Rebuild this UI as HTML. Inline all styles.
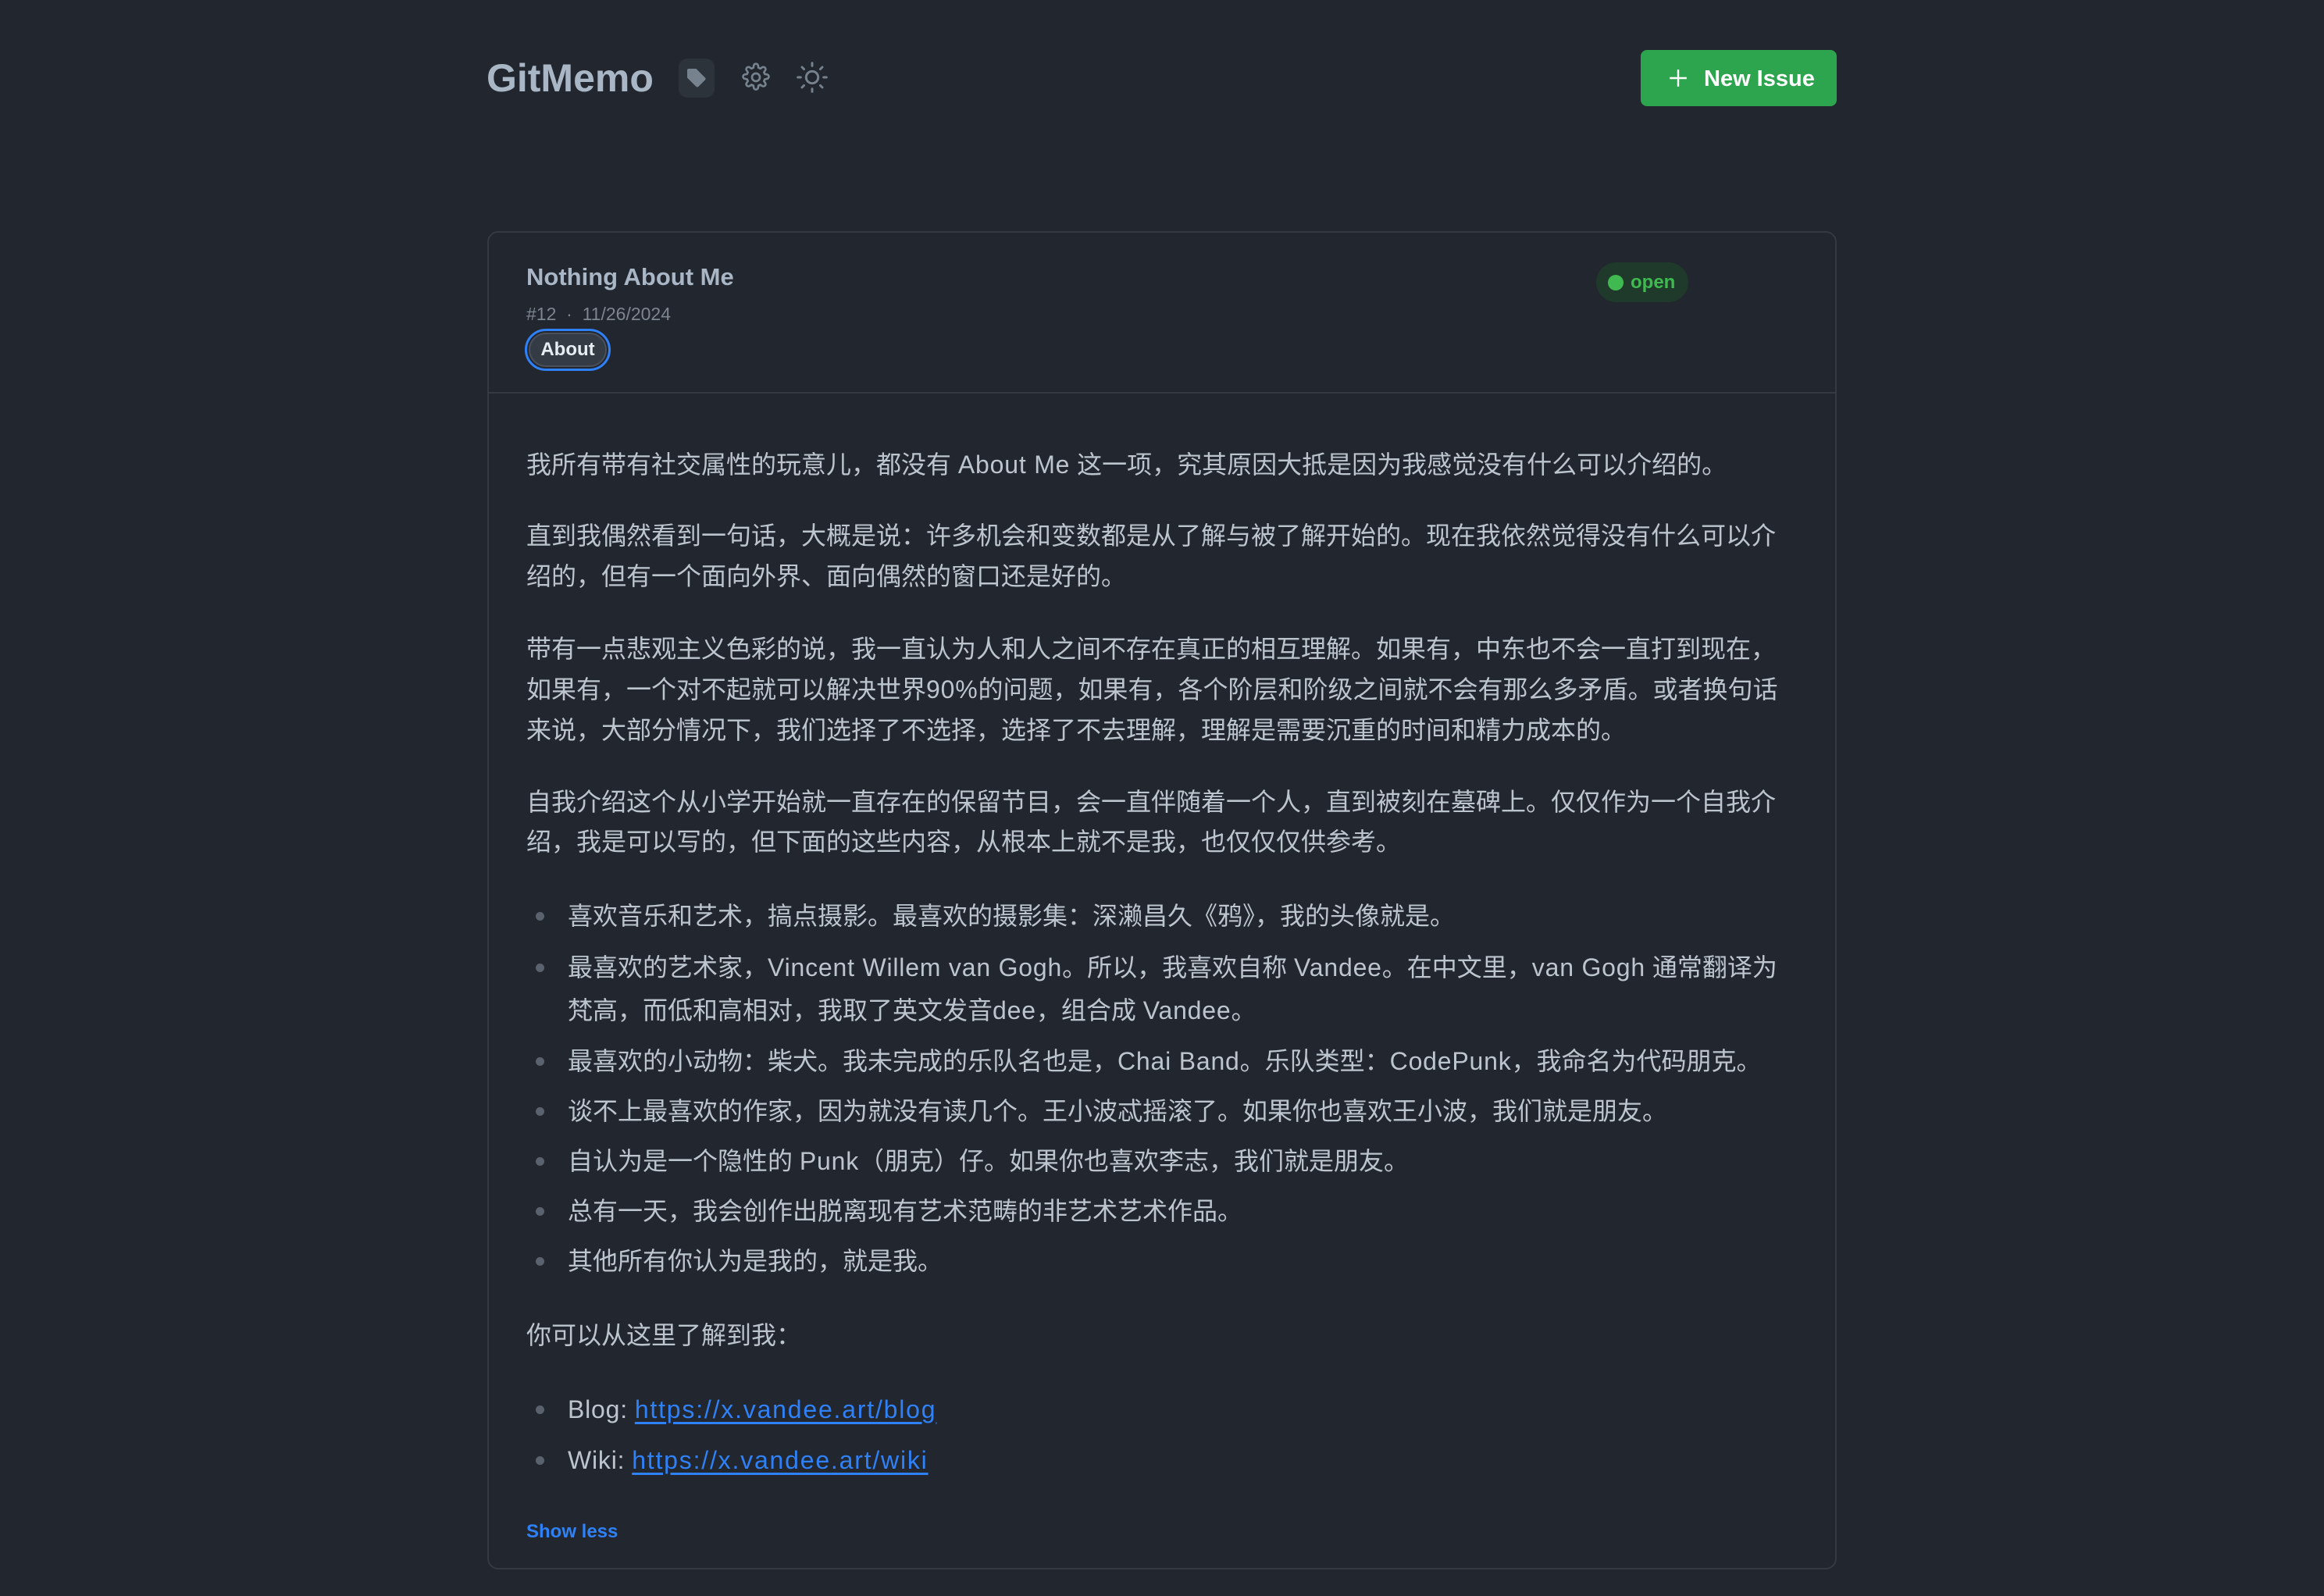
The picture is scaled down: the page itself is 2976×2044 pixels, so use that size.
<!DOCTYPE html>
<html><head><meta charset="utf-8"><style>
*{margin:0;padding:0;box-sizing:border-box}
body{width:2976px;height:2044px;background:#22262e;font-family:"Liberation Sans","Noto Sans CJK SC",sans-serif;position:relative;overflow:hidden}
.a{position:absolute;white-space:nowrap}
.logo{left:623px;top:68px;font-size:50px;font-weight:bold;color:#a9b6c5;line-height:64px}
.card{left:624px;top:296px;width:1728px;height:1714px;border:2px solid #353a42;border-radius:14px}
.sep{left:626px;top:502px;width:1724px;height:2px;background:#353a42}
.t{left:674px;font-size:32px;color:#bcc5ce;line-height:50px}
.li{left:727px;font-size:32px;color:#bcc5ce;line-height:50px}
.dot{position:absolute;width:11px;height:11px;border-radius:50%;background:#5a626d}
a{color:#2f81f7;text-decoration:underline;text-underline-offset:5px;letter-spacing:1.8px}
.w{letter-spacing:0.8px}
</style></head><body>
<div class="a logo">GitMemo</div>
<div class="a" style="left:869px;top:75px;width:46px;height:50px;background:#2d333b;border-radius:11px"></div>
<svg class="a" style="left:876px;top:84px" width="32" height="32" viewBox="0 0 24 24"><path d="M3 4.5A1.5 1.5 0 0 1 4.5 3h7.1l8.6 8.6a1.6 1.6 0 0 1 0 2.2l-6.4 6.4a1.6 1.6 0 0 1-2.2 0L3 11.6z" fill="#76838f"/></svg>
<svg class="a" style="left:948px;top:79px" width="40" height="40" viewBox="0 0 24 24" fill="none" stroke="#76838f" stroke-width="1.6" stroke-linejoin="round"><path d="M10.3 3.3a1.7 1.7 0 0 1 3.4 0l.3 1.4 1.4.6 1.2-.8a1.7 1.7 0 0 1 2.4 2.4l-.8 1.2.6 1.4 1.4.3a1.7 1.7 0 0 1 0 3.4l-1.4.3-.6 1.4.8 1.2a1.7 1.7 0 0 1-2.4 2.4l-1.2-.8-1.4.6-.3 1.4a1.7 1.7 0 0 1-3.4 0l-.3-1.4-1.4-.6-1.2.8a1.7 1.7 0 0 1-2.4-2.4l.8-1.2-.6-1.4-1.4-.3a1.7 1.7 0 0 1 0-3.4l1.4-.3.6-1.4-.8-1.2a1.7 1.7 0 0 1 2.4-2.4l1.2.8 1.4-.6z"/><circle cx="12" cy="12" r="3"/></svg>
<svg class="a" style="left:1018px;top:77px" width="44" height="44" viewBox="0 0 24 24" fill="none" stroke="#76838f" stroke-width="1.6" stroke-linecap="round"><circle cx="12" cy="12" r="4.2"/><path d="M12 2v2M12 20v2M2 12h2M20 12h2M4.9 4.9l1.4 1.4M17.7 17.7l1.4 1.4M4.9 19.1l1.4-1.4M17.7 6.3l1.4-1.4"/></svg>
<div class="a" style="left:2101px;top:64px;width:251px;height:72px;background:#2da44e;border-radius:8px"></div>
<svg class="a" style="left:2136px;top:87px" width="26" height="26" viewBox="0 0 24 24" stroke="#fff" stroke-width="2.2"><path d="M12 2v20M2 12h20"/></svg>
<div class="a" style="left:2182px;top:81px;font-size:29px;font-weight:bold;color:#fff;line-height:40px">New Issue</div>

<div class="a card"></div>
<div class="a sep"></div>
<div class="a" style="left:674px;top:335px;font-size:31px;font-weight:bold;color:#a9b6c5;line-height:40px">Nothing About Me</div>
<div class="a" style="left:674px;top:387px;font-size:23px;color:#7d8590;line-height:30px">#12 &nbsp;·&nbsp; 11/26/2024</div>
<div class="a" style="left:672px;top:421px;width:110px;height:54px;border:3px solid #2f81f7;border-radius:27px"></div>
<div class="a" style="left:677px;top:426px;width:100px;height:44px;border:2px solid #4a515b;background:#353b45;border-radius:22px;color:#e6edf3;font-size:24px;font-weight:bold;text-align:center;line-height:40px">About</div>
<div class="a" style="left:2044px;top:336px;width:118px;height:51px;background:#1f3a2a;border-radius:26px"></div>
<div class="a" style="left:2059px;top:352px;width:20px;height:20px;border-radius:50%;background:#3fb950"></div>
<div class="a" style="left:2088px;top:345px;font-size:24px;font-weight:bold;color:#3fb950;line-height:34px">open</div>

<div class="a t" style="top:570px">我所有带有社交属性的玩意儿，都没有 <span class="w">About Me</span> 这一项，究其原因大抵是因为我感觉没有什么可以介绍的。</div>
<div class="a t" style="top:661px">直到我偶然看到一句话，大概是说：许多机会和变数都是从了解与被了解开始的。现在我依然觉得没有什么可以介</div>
<div class="a t" style="top:713px">绍的，但有一个面向外界、面向偶然的窗口还是好的。</div>
<div class="a t" style="top:806px">带有一点悲观主义色彩的说，我一直认为人和人之间不存在真正的相互理解。如果有，中东也不会一直打到现在，</div>
<div class="a t" style="top:858px">如果有，一个对不起就可以解决世界<span class="w">90%</span>的问题，如果有，各个阶层和阶级之间就不会有那么多矛盾。或者换句话</div>
<div class="a t" style="top:910px">来说，大部分情况下，我们选择了不选择，选择了不去理解，理解是需要沉重的时间和精力成本的。</div>
<div class="a t" style="top:1002px">自我介绍这个从小学开始就一直存在的保留节目，会一直伴随着一个人，直到被刻在墓碑上。仅仅作为一个自我介</div>
<div class="a t" style="top:1053px">绍，我是可以写的，但下面的这些内容，从根本上就不是我，也仅仅仅供参考。</div>

<div class="dot" style="left:686px;top:1168px"></div><div class="a li" style="top:1148px">喜欢音乐和艺术，搞点摄影。最喜欢的摄影集：深濑昌久《鸦》，我的头像就是。</div>
<div class="dot" style="left:686px;top:1234px"></div><div class="a li" style="top:1214px">最喜欢的艺术家，<span class="w">Vincent Willem van Gogh</span>。所以，我喜欢自称 <span class="w">Vandee</span>。在中文里，<span class="w">van Gogh</span> 通常翻译为</div>
<div class="a li" style="top:1269px">梵高，而低和高相对，我取了英文发音<span class="w">dee</span>，组合成 <span class="w">Vandee</span>。</div>
<div class="dot" style="left:686px;top:1354px"></div><div class="a li" style="top:1334px">最喜欢的小动物：柴犬。我未完成的乐队名也是，<span class="w">Chai Band</span>。乐队类型：<span class="w">CodePunk</span>，我命名为代码朋克。</div>
<div class="dot" style="left:686px;top:1418px"></div><div class="a li" style="top:1398px">谈不上最喜欢的作家，因为就没有读几个。王小波忒摇滚了。如果你也喜欢王小波，我们就是朋友。</div>
<div class="dot" style="left:686px;top:1482px"></div><div class="a li" style="top:1462px">自认为是一个隐性的 <span class="w">Punk</span>（朋克）仔。如果你也喜欢李志，我们就是朋友。</div>
<div class="dot" style="left:686px;top:1546px"></div><div class="a li" style="top:1526px">总有一天，我会创作出脱离现有艺术范畴的非艺术艺术作品。</div>
<div class="dot" style="left:686px;top:1610px"></div><div class="a li" style="top:1590px">其他所有你认为是我的，就是我。</div>

<div class="a t" style="top:1685px">你可以从这里了解到我：</div>
<div class="dot" style="left:686px;top:1800px"></div><div class="a li" style="top:1780px"><span class="w">Blog:</span> <a>https://x.vandee.art/blog</a></div>
<div class="dot" style="left:686px;top:1865px"></div><div class="a li" style="top:1845px"><span class="w">Wiki:</span> <a>https://x.vandee.art/wiki</a></div>
<div class="a" style="left:674px;top:1947px;font-size:24px;font-weight:bold;color:#2f81f7;line-height:30px">Show less</div>
</body></html>
